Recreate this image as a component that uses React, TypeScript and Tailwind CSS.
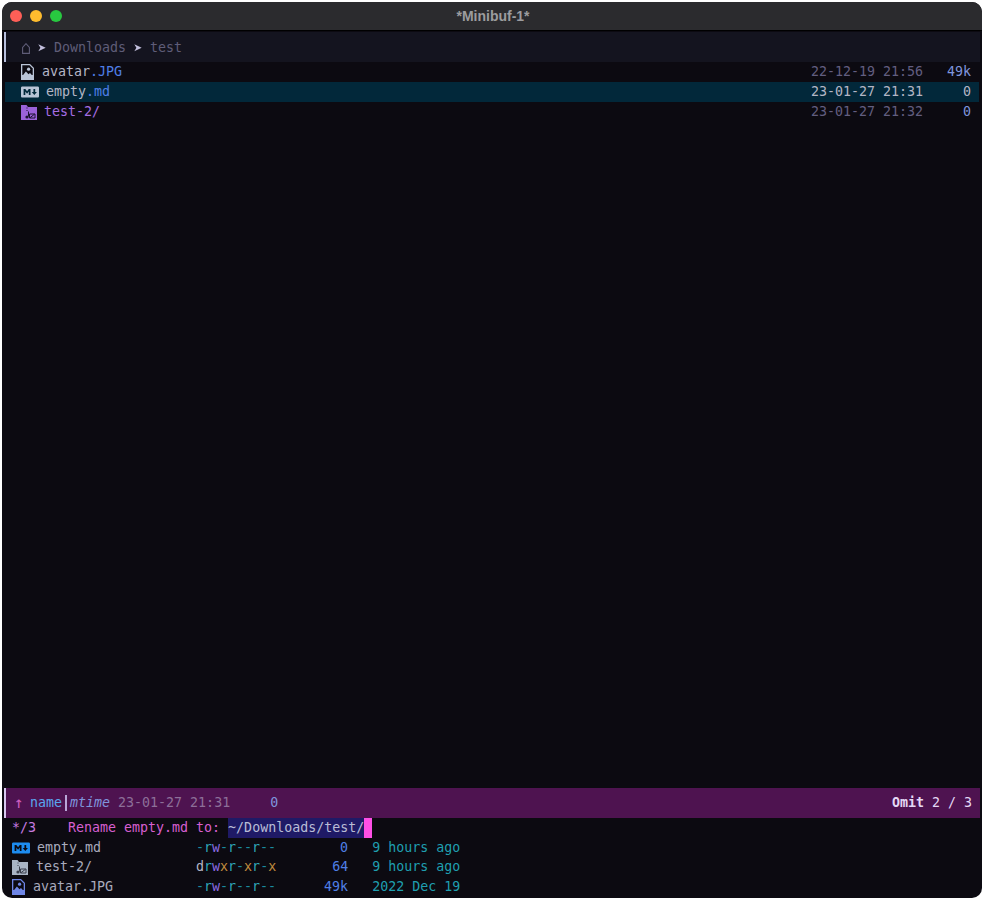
import React from "react";
import { FaMarkdown } from "react-icons/fa";

const mono = "font-['DejaVu_Sans_Mono',monospace] text-[13.3px] leading-[20px]";

// file-with-picture glyph
const ImageIcon = ({ color, bg }: { color: string; bg: string }) => (
  <svg width="13" height="16" viewBox="0 0 13 16" className="shrink-0">
    <path d="M0 0h9l4 4v12h-13z" fill={color} />
    <path d="M1.3 1.3h7.2l3.2 3.2v6.5h-10.4z" fill={bg} />
    <circle cx="7.6" cy="5.2" r="1.6" fill={color} />
    <path d="M1.3 12l3.6-4.6 2.6 2.8 1.5-1.3 2.7 3.1z" fill={color} />
  </svg>
);

const FolderIcon = ({ color, mark }: { color: string; mark: string }) => (
  <svg width="16" height="15" viewBox="0 0 16 15" className="shrink-0">
    <path d="M0 0h5.5l1.5 2h9v13h-16z" fill={color} />
    <path d="M6 2.5v1M6 5v1M8.5 9h5.5v4h-5.5zM9 12.7l4.5-3.5" stroke={mark} strokeWidth="1" fill="none" />
    <path d="M7.5 6.5v5" stroke={mark} strokeWidth="1" />
    <circle cx="6" cy="12" r="1.6" fill={mark} />
  </svg>
);

const HomeIcon = () => (
  <svg width="8" height="11" viewBox="0 0 8 11" className="shrink-0">
    <path d="M0.6 10.4v-6l3.4-3.7 3.4 3.7v6z" fill="none" stroke="#5f5d78" strokeWidth="1.1" />
  </svg>
);

const Chevron = () => (
  <svg width="8" height="8" viewBox="0 0 8 8" className="shrink-0">
    <path d="M0.3 0.3L7.7 3.7L0.3 7.3L2.4 3.7z" fill="#c2bfdc" />
  </svg>
);

const FileRow = ({
  icon,
  name,
  date,
  size,
  gap,
  active,
  dateCls,
  sizeCls,
}: {
  icon: React.ReactNode;
  name: React.ReactNode;
  date: string;
  size: string;
  gap: string;
  active?: boolean;
  dateCls: string;
  sizeCls: string;
}) => (
  <div className={`flex h-5 items-center pr-2 ${active ? "bg-[#02283a]" : ""}`}>
    <div className={`flex flex-1 items-center pl-4 ${gap}`}>
      {icon}
      <span>{name}</span>
    </div>
    <span className={dateCls}>{date}</span>
    <span className={`w-12 text-right ${sizeCls}`}>{size}</span>
  </div>
);

const Perm = ({ kind }: { kind: "file" | "dir" }) =>
  kind === "file" ? (
    <span>
      <span className="text-[#1a8a9e]">-</span>
      <span className="text-[#2fa5b8]">r</span>
      <span className="text-[#8a6ae0]">w</span>
      <span className="text-[#1a8a9e]">-</span>
      <span className="text-[#2fa5b8]">r</span>
      <span className="text-[#1a8a9e]">--</span>
      <span className="text-[#2fa5b8]">r</span>
      <span className="text-[#1a8a9e]">--</span>
    </span>
  ) : (
    <span>
      <span className="text-[#b4b6c6]">d</span>
      <span className="text-[#2fa5b8]">r</span>
      <span className="text-[#8a6ae0]">w</span>
      <span className="text-[#c08a3e]">x</span>
      <span className="text-[#2fa5b8]">r</span>
      <span className="text-[#1a8a9e]">-</span>
      <span className="text-[#c08a3e]">x</span>
      <span className="text-[#2fa5b8]">r</span>
      <span className="text-[#1a8a9e]">-</span>
      <span className="text-[#c08a3e]">x</span>
    </span>
  );

const CompletionRow = ({
  icon,
  name,
  kind,
  size,
  when,
  gap,
  height,
}: {
  icon: React.ReactNode;
  name: string;
  kind: "file" | "dir";
  size: string;
  when: string;
  gap: string;
  height: string;
}) => (
  <div className={`flex items-center pl-[10px] ${height}`}>
    <div className={`flex w-[184px] items-center ${gap}`}>
      {icon}
      <span className="text-[#a9abbd]">{name}</span>
    </div>
    <Perm kind={kind} />
    <span className="w-[72px] text-right text-[#4f7fe6]">{size}</span>
    <span className="ml-6 text-[#1f9fb0]">{when}</span>
  </div>
);

export default function App() {
  return (
    <div className={`h-[900px] w-[984px] bg-white p-[2px] ${mono}`}>
      <div className="flex h-full flex-col overflow-hidden rounded-[10px] bg-[#0c0a11]">
        {/* title bar */}
        <div className="flex h-[29px] shrink-0 items-center border-b border-black bg-[#2b2b2e] pl-2">
          <div className="flex gap-2">
            <span className="h-3 w-3 rounded-full bg-[#ff5f57]" />
            <span className="h-3 w-3 rounded-full bg-[#febc2e]" />
            <span className="h-3 w-3 rounded-full bg-[#28c840]" />
          </div>
          <div className="flex-1 pr-[58px] text-center font-['Liberation_Sans',sans-serif] text-[14px] font-bold text-[#9c9c9f]">
            *Minibuf-1*
          </div>
        </div>

        {/* breadcrumb header */}
        <div className="mx-[2px] mt-[1px] flex h-[30px] shrink-0 items-center gap-2 border-l-[2px] border-[#b7bfdc] bg-[#14141f] pl-4 pt-[2px] text-[#5f5d78]">
          <HomeIcon />
          <Chevron />
          <span>Downloads</span>
          <Chevron />
          <span>test</span>
        </div>

        {/* file list */}
        <div className="mx-[3px] flex-1 text-[#b4b6c6]">
          <FileRow
            icon={<ImageIcon color="#b9c4d6" bg="#0c0a11" />}
            name={
              <>
                avatar<span className="text-[#4f7fe6]">.JPG</span>
              </>
            }
            date="22-12-19 21:56"
            size="49k"
            gap="gap-2"
            dateCls="text-[#625e80]"
            sizeCls="text-[#7f95dd]"
          />
          <FileRow
            active
            icon={<FaMarkdown className="shrink-0 text-[18px] text-[#b9c4d6]" />}
            name={
              <>
                empty<span className="text-[#4f7fe6]">.md</span>
              </>
            }
            date="23-01-27 21:31"
            size="0"
            gap="gap-[7px]"
            dateCls="text-[#b4b6c6]"
            sizeCls="text-[#b4b6c6]"
          />
          <FileRow
            icon={<FolderIcon color="#9b62d9" mark="#1b1230" />}
            name={<span className="text-[#a56de2]">test-2/</span>}
            date="23-01-27 21:32"
            size="0"
            gap="gap-[7px]"
            dateCls="text-[#625e80]"
            sizeCls="text-[#7f95dd]"
          />
        </div>

        {/* mode line */}
        <div className="mx-[2px] flex h-[30px] shrink-0 items-center border-l-[2px] border-[#d7c7ee] bg-[#4e1350] pl-2 pr-2">
          <span className="w-4 text-[16px] text-[#d05fc0]">↑</span>
          <span className="text-[#5aa5ee]">name</span>
          <span className="mx-[3px] h-4 w-[2px] bg-[#b9a6d8]" />
          <span className="italic text-[#7f95dd]">mtime</span>
          <span className="ml-2 text-[#8d6f99]">23-01-27 21:31</span>
          <span className="ml-10 text-[#7f95dd]">0</span>
          <span className="ml-auto text-[#e4d8f5]">
            <span className="font-bold">Omit</span> 2 / 3
          </span>
        </div>

        {/* minibuffer */}
        <div className="shrink-0 pb-[2px]">
          <div className="flex h-5 items-center pl-[10px] text-[#d65fd0]">
            <span className="w-14 text-[#c77be0]">*/3</span>
            <span className="whitespace-pre">Rename empty.md to: </span>
            <span className="bg-[#1f1a66] text-[#b9bdd6]">~/Downloads/test/</span>
            <span className="h-5 w-2 bg-[#ff4fe6]" />
          </div>
          <CompletionRow
            icon={<FaMarkdown className="shrink-0 text-[18px] text-[#1d8cf0]" />}
            name="empty.md"
            kind="file"
            size="0"
            when="9 hours ago"
            gap="gap-[7px]"
            height="h-[19px]"
          />
          <CompletionRow
            icon={<FolderIcon color="#a9b4c4" mark="#3a3f4c" />}
            name="test-2/"
            kind="dir"
            size="64"
            when="9 hours ago"
            gap="gap-2"
            height="h-5"
          />
          <CompletionRow
            icon={<ImageIcon color="#6f86e6" bg="#0c0a11" />}
            name="avatar.JPG"
            kind="file"
            size="49k"
            when="2022 Dec 19"
            gap="gap-2"
            height="h-[19px]"
          />
        </div>
      </div>
    </div>
  );
}
